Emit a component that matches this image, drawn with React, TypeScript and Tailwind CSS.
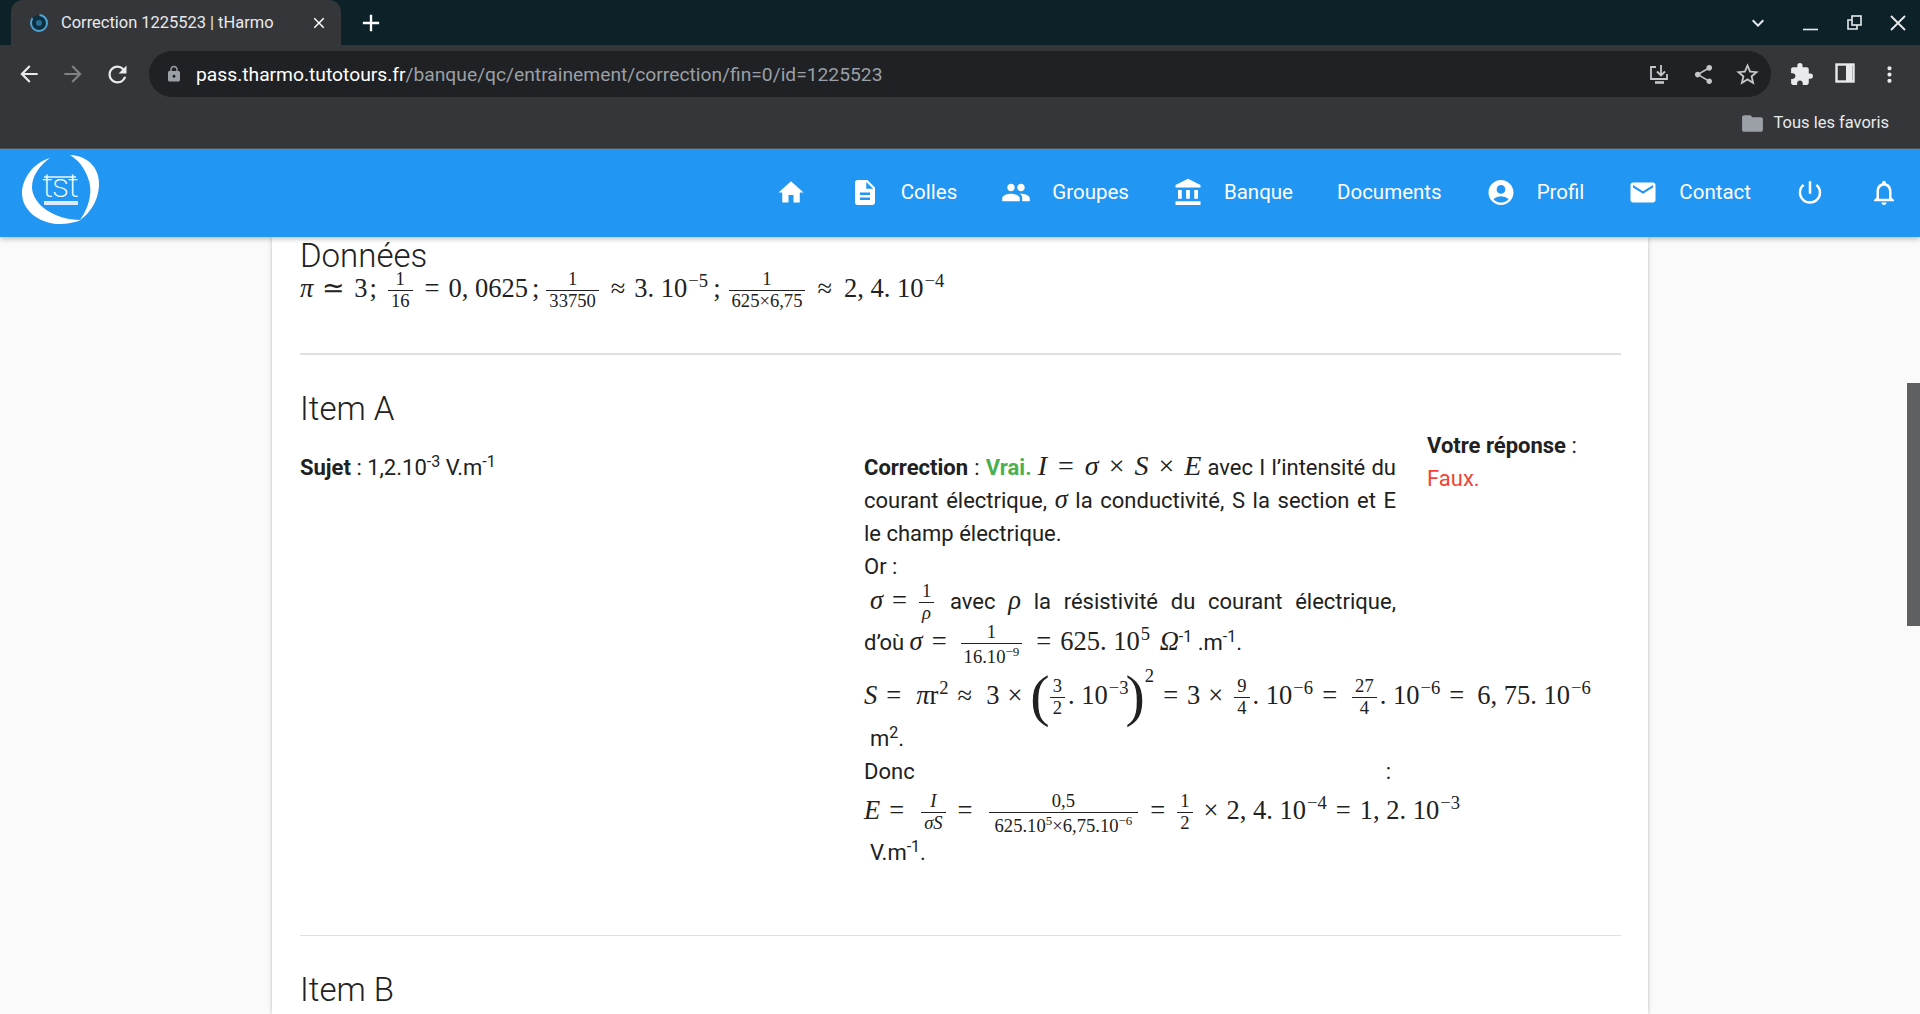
import React from "react";
import {
  MdHome, MdDescription, MdPeople, MdAccountBalance, MdAccountCircle, MdEmail,
  MdPowerSettingsNew, MdNotificationsNone, MdArrowBack, MdArrowForward, MdRefresh,
  MdLock, MdStarBorder, MdShare, MdExtension, MdMoreVert, MdFolder, MdClose, MdAdd,
  MdKeyboardArrowDown,
} from "react-icons/md";

const Serif = ({ children, className = "" }: { children: React.ReactNode; className?: string }) => (
  <span className={"font-['Liberation_Serif',serif] text-[26.5px] leading-[0] whitespace-nowrap text-[#212121] " + className}>{children}</span>
);
const Op = ({ children, className = "" }: { children: React.ReactNode; className?: string }) => <span className={"mx-[9px] " + className}>{children}</span>;
const Bin = ({ children, className = "" }: { children: React.ReactNode; className?: string }) => <span className={"mx-[8px] " + className}>{children}</span>;
const I = ({ children, className = "" }: { children: React.ReactNode; className?: string }) => <span className={"italic " + className}>{children}</span>;
const Sup = ({ children }: { children: React.ReactNode }) => (
  <span className="text-[18.6px] align-[10px] leading-[0] ml-px">{children}</span>
);
const Frac = ({ n, d, className = "" }: { n: React.ReactNode; d: React.ReactNode; className?: string }) => (
  <span className={"inline-flex flex-col items-center align-[12px] text-[18.6px] leading-[20px] mx-[3px] " + className}>
    <span className="px-[3px] pb-[1px]">{n}</span>
    <span className="self-stretch text-center border-t border-[#212121] px-[3px]">{d}</span>
  </span>
);
const SmSup = ({ children }: { children: React.ReactNode }) => (
  <span className="text-[13px] align-[7px] leading-[0]">{children}</span>
);
const TSup = ({ children }: { children: React.ReactNode }) => (
  <span className="text-[16px] align-[8px] leading-[0]">{children}</span>
);

const NavIcon = ({ children }: { children: React.ReactNode }) => (
  <span className="w-[30px] h-[30px] flex items-center justify-center text-[37px]">{children}</span>
);
const NavItem = ({ icon, label }: { icon?: React.ReactNode; label?: string }) => (
  <div className="flex items-center px-[22px] gap-[21px]">
    {icon && <NavIcon>{icon}</NavIcon>}
    {label && <span className="text-[20.5px]">{label}</span>}
  </div>
);

const ToolBtn = ({ children, className = "" }: { children: React.ReactNode; className?: string }) => (
  <div className={"w-[44px] h-[46px] flex items-center justify-center shrink-0 " + className}>{children}</div>
);

const Logo = () => (
  <svg viewBox="0 9 130 88" className="w-[130px] h-[88px] shrink-0">
    <path fill="#fff" d="M50 18C30 24 22 42 22 53C22 72 42 85 62 84C70 83.5 76 82 81 80C54 80 32 64 32 47C32 36 40 25 50 18Z" />
    <path fill="#fff" d="M70 15C90 16 100 30 99 46C98 62 89 74 80 80C90 66 93 50 88 38C84 27 78 20 70 15Z" />
    <text x="60" y="57" textAnchor="middle" fill="#fff" fontFamily="Roboto, sans-serif" fontWeight={200} fontSize="34" letterSpacing="-1">tst</text>
    <path stroke="#fff" strokeWidth="1.4" d="M44 37H76" />
    <rect x="44" y="61" width="34" height="4" fill="#dbeafe" />
  </svg>
);

const Favicon = () => (
  <svg viewBox="0 0 20 20" className="w-[20px] h-[20px]">
    <circle cx="10" cy="10" r="8" fill="#0d3040" stroke="#4fa3d1" strokeWidth="2" strokeDasharray="30 8" />
    <circle cx="10" cy="10" r="3" fill="#2a6f97" />
  </svg>
);

export default function App() {
  return (
    <div className="relative h-[1014px] overflow-hidden flex flex-col bg-[#fafafa] font-['Roboto',sans-serif] text-[#212121]">
      {/* tab strip */}
      <div className="h-[45px] shrink-0 bg-[#0d2129] flex items-end text-white pl-[11px]">
        <div className="w-[330px] h-[45px] bg-[#35363a] rounded-t-[12px] flex items-center pl-[18px] pr-[13px]">
          <Favicon />
          <span className="ml-[12px] pt-[1px] text-[16.45px] text-[#e8eaed] whitespace-nowrap">Correction 1225523 | tHarmo</span>
          <MdClose className="ml-auto text-[18px] text-white" />
        </div>
        <div className="h-[45px] flex items-center ml-[16px]"><MdAdd className="text-[28px]" /></div>
        <div className="ml-auto h-[45px] flex items-center pr-[10px] text-[#e8eaed]">
          <MdKeyboardArrowDown className="text-[24px] mr-[28px]" />
          <svg viewBox="0 0 24 24" className="w-[24px] h-[24px] mr-[20px]"><path stroke="currentColor" strokeWidth="1.6" d="M5 18.5H20" /></svg>
          <svg viewBox="0 0 24 24" className="w-[24px] h-[24px] mr-[20px]" fill="none" stroke="currentColor" strokeWidth="1.6"><rect x="10" y="5" width="9" height="9" /><path d="M10 9H6V18H15V14" /></svg>
          <svg viewBox="0 0 24 24" className="w-[24px] h-[24px]" fill="none" stroke="currentColor" strokeWidth="1.8"><path d="M5 5L19 19M19 5L5 19" /></svg>
        </div>
      </div>

      {/* toolbar */}
      <div className="h-[58px] shrink-0 bg-[#35363a] flex items-start pt-[6px] pl-[7px] text-[#e8eaed]">
        <ToolBtn><MdArrowBack className="text-[26px]" /></ToolBtn>
        <ToolBtn><MdArrowForward className="text-[26px] text-[#7f8184]" /></ToolBtn>
        <ToolBtn><MdRefresh className="text-[27px]" /></ToolBtn>
        <div className="w-[1622px] ml-[10px] h-[46px] rounded-full bg-[#202124] flex items-center pl-[16px] pr-[2px] shrink-0">
          <MdLock className="text-[18px] text-[#9aa0a6]" />
          <span className="ml-[13px] pt-[2px] text-[19.25px] whitespace-nowrap">
            <span className="text-white">pass.tharmo.tutotours.fr</span>
            <span className="text-[#9aa0a6]">/banque/qc/entrainement/correction/fin=0/id=1225523</span>
          </span>
          <div className="ml-auto flex text-[#c4c7c9]">
            <ToolBtn>
              <svg viewBox="0 0 24 24" className="w-[24px] h-[24px]" fill="none" stroke="currentColor" strokeWidth="1.8">
                <path d="M9 5H4V17H20V12" /><path d="M14 3V13M10 9.5L14 13.5L18 9.5" /><path d="M8 20.5H17" strokeWidth="2.6" />
              </svg>
            </ToolBtn>
            <ToolBtn><MdShare className="text-[23px]" /></ToolBtn>
            <ToolBtn><MdStarBorder className="text-[27px]" /></ToolBtn>
          </div>
        </div>
        <ToolBtn className="ml-[8px]"><MdExtension className="text-[25px]" /></ToolBtn>
        <ToolBtn>
          <svg viewBox="0 0 24 24" className="w-[24px] h-[24px] mb-[2px]" fill="none" stroke="currentColor" strokeWidth="2.4"><rect x="3.5" y="3.5" width="17" height="17" /><path d="M16 3V21" strokeWidth="6" /></svg>
        </ToolBtn>
        <ToolBtn><MdMoreVert className="text-[25px]" /></ToolBtn>
      </div>

      {/* bookmarks */}
      <div className="h-[46px] shrink-0 bg-[#35363a] border-b border-[#55565a] flex items-center justify-end pr-[31px] pb-[4px]">
        <MdFolder className="text-[25px] text-[#9aa0a6] mr-[8px]" />
        <span className="text-[16.5px] text-[#e8eaed]">Tous les favoris</span>
      </div>

      {/* nav */}
      <div className="relative z-10 h-[88px] shrink-0 bg-[#2196f3] text-white flex items-center justify-between shadow-[0_2px_5px_rgba(0,0,0,0.25)]">
        <Logo />
        <div className="flex items-center pb-[2px] -mr-[1px]">
          <NavItem icon={<MdHome />} />
          <NavItem icon={<MdDescription />} label="Colles" />
          <NavItem icon={<MdPeople />} label="Groupes" />
          <NavItem icon={<MdAccountBalance />} label="Banque" />
          <NavItem label="Documents" />
          <NavItem icon={<MdAccountCircle />} label="Profil" />
          <NavItem icon={<MdEmail />} label="Contact" />
          <NavItem icon={<MdPowerSettingsNew />} />
          <NavItem icon={<MdNotificationsNone />} />
        </div>
      </div>

      {/* page */}
      <div className="flex-1 overflow-hidden flex justify-start pl-[272px]">
        <div className="w-[1376px] shrink-0 bg-white pl-[28px] pr-[27px] shadow-[0_0_4px_rgba(0,0,0,0.25)]">
          <h2 className="pt-[2px] text-[33px] font-light leading-[34px]">Données</h2>
          <div className="-mt-[4px] h-[84px] leading-[0]">
            <Serif>
              <I>π</I><Op className="mx-[5px]">≃</Op>3<span className="ml-[2px]">;</span>
              <Frac className="ml-[11px]" n="1" d="16" />
              <Op>=</Op>0, 0625<span className="mx-[4px]">;</span>
              <Frac n="1" d="33750" />
              <Op>≈</Op>3. 10<Sup>−5</Sup><span className="mx-[5px]">;</span>
              <Frac n="1" d="625×6,75" />
              <Op className="mr-[12px]">≈</Op>2, 4. 10<Sup>−4</Sup>
            </Serif>
          </div>
          <div className="h-[2px] bg-[#e0e0e0]" />
          <h3 className="mt-[38px] text-[33px] font-light leading-[32px]">Item A</h3>
          <div className="mt-[4px] flex text-[22px] leading-[33px]">
            <div className="w-[564px] shrink-0 pt-[22px]">
              <b>Sujet</b> : 1,2.10<TSup>-3</TSup> V.m<TSup>-1</TSup>
            </div>
            <div className="w-[532px] shrink-0 pt-[22px]">
              <p className="text-justify">
                <b>Correction</b> : <b className="text-[#4caf50]">Vrai.</b>{" "}
                <Serif><span className="text-[28px]"><I>I</I><Op className="mx-[11px]">=</Op><I>σ</I><Bin className="mx-[10px]">×</Bin><I>S</I><Bin className="mx-[10px]">×</Bin><I>E</I></span></Serif>{" "}
                avec I l’intensité du courant électrique, <Serif><I>σ</I></Serif> la conductivité, S la section et E le champ électrique.
              </p>
              <p>Or :</p>
              <p className="-mt-[2px] h-[41px] pl-[6px] [text-align-last:justify] whitespace-nowrap">
                <Serif><I>σ</I><Op>=</Op><Frac n="1" d={<I>ρ</I>} /></Serif> avec <Serif><I>ρ</I></Serif> la résistivité du courant électrique,
              </p>
              <p className="h-[54px] whitespace-nowrap">
                d’où <Serif><I>σ</I><Op>=</Op><Frac className="mx-[5px]" n="1" d={<span className="inline-block pt-[3px]">16.10<SmSup>−9</SmSup></span>} /><Op>=</Op>625. 10<Sup>5</Sup> <I className="ml-[3px]">Ω</I></Serif><TSup>-1</TSup> .m<TSup>-1</TSup>.
              </p>
              <p className="h-[46px] whitespace-nowrap">
                <Serif>
                  <I>S</I><Op>=</Op><I className="ml-[6px]">π</I>r<Sup>2</Sup><Op className="mr-[14px]">≈</Op>3<Bin>×</Bin>
                  <span className="text-[58px] font-light align-[-11px] leading-[0] -mr-[3px]">(</span>
                  <Frac className="mx-0" n="3" d="2" />. 10<Sup>−3</Sup>
                  <span className="text-[58px] font-light align-[-11px] leading-[0] -ml-[3px]">)</span>
                  <span className="text-[18.6px] align-[22px] leading-[0]">2</span><Op>=</Op>3<Bin>×</Bin><Frac n="9" d="4" />. 10<Sup>−6</Sup><Op className="mr-[12px]">=</Op>
                  <Frac n="27" d="4" />. 10<Sup>−6</Sup><Op className="mr-[13px]">=</Op>6, 75. 10<Sup>−6</Sup>
                </Serif>
              </p>
              <p className="h-[33px] pl-[6px]">m<TSup>2</TSup>.</p>
              <p className="h-[36px] flex justify-between w-[527px]"><span>Donc</span><span>:</span></p>
              <p className="h-[45px] whitespace-nowrap">
                <Serif>
                  <I>E</I><Op>=</Op><Frac className="ml-[8px]" n={<I>I</I>} d={<I>σS</I>} /><Op>=</Op>
                  <Frac className="ml-[7px]" n="0,5" d={<span className="inline-block pt-[3px] px-[3px]">625.10<SmSup>5</SmSup>×6,75.10<SmSup>−6</SmSup></span>} /><Op>=</Op>
                  <Frac n="1" d="2" /><Bin>×</Bin>2, 4. 10<Sup>−4</Sup><Op>=</Op>1, 2. 10<Sup>−3</Sup>
                </Serif>
              </p>
              <p className="h-[33px] pl-[6px]">V.m<TSup>-1</TSup>.</p>
            </div>
            <div className="ml-[31px]">
              <p><b>Votre réponse</b> :</p>
              <p className="text-[#f44336]">Faux.</p>
            </div>
          </div>
          <div className="mt-[66px] h-px bg-[#e0e0e0]" />
          <h3 className="mt-[38px] text-[33px] font-light leading-[32px]">Item B</h3>
        </div>
      </div>

      {/* scrollbar thumb */}
      <div className="absolute right-0 top-[383px] w-[13px] h-[243px] bg-[#5f6061] z-20" />
    </div>
  );
}
